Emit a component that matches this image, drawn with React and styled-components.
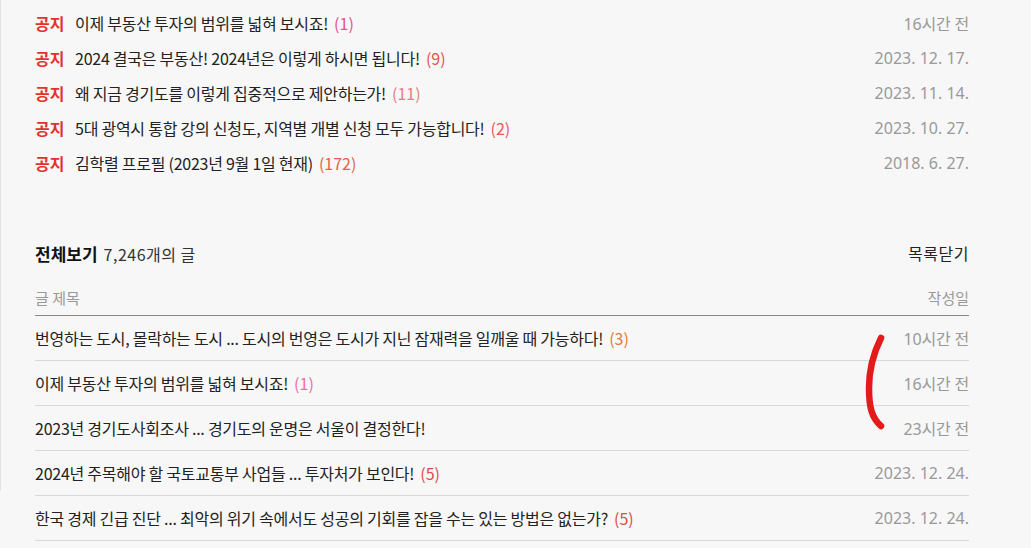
import React from "react";
import styled, { createGlobalStyle } from "styled-components";

const Global = createGlobalStyle`
  html, body { margin: 0; padding: 0; background: #f7f7f7; }
  body {
    font-family: "Noto Sans CJK KR", "Noto Sans", sans-serif;
    color: #222;
  }
`;

const Page = styled.div`
  position: relative;
  width: 1031px;
  height: 548px;
  overflow: hidden;
  background: #f7f7f7;
  box-sizing: border-box;
  padding: 5px 62px 0 35px;
  &::before {
    content: "";
    position: absolute;
    left: 0;
    top: 0;
    width: 1px;
    height: 491px;
    background: #e2e2e2;
  }
`;

const NoticeList = styled.ul`
  list-style: none;
  margin: 0;
  padding: 0;
`;

const NoticeRow = styled.li`
  display: flex;
  align-items: center;
  height: 35px;
  font-size: 16px;
`;

const Badge = styled.span`
  color: #e3322b;
  font-weight: 700;
  width: 40px;
  flex: none;
`;

const Title = styled.span`
  flex: 1;
  color: #222;
  white-space: nowrap;
  letter-spacing: -0.25px;
`;

const Count = styled.span`
  color: ${(p) => p.$c};
  margin-left: 6px;
  letter-spacing: 0;
`;

const DateText = styled.span`
  color: #999;
  font-family: "Noto Sans", "Noto Sans CJK KR", sans-serif;
  font-size: 16px;
  letter-spacing: ${(p) => (p.$tight ? "-0.2px" : "0")};
  white-space: nowrap;
`;

const SectionHead = styled.div`
  display: flex;
  align-items: center;
  justify-content: space-between;
  height: 30px;
  margin-top: 58px;
  font-size: 16px;
`;

const SectionTitle = styled.div`
  display: flex;
  align-items: baseline;
  strong { font-weight: 700; font-size: 17px; color: #111; margin-right: 6px; }
  span { color: #333; font-size: 16px; letter-spacing: 0.5px; }
`;

const CloseLink = styled.span`
  color: #222;
  letter-spacing: 0.5px;
`;

const ColHead = styled.div`
  display: flex;
  align-items: center;
  justify-content: space-between;
  height: 35px;
  margin-top: 12px;
  border-bottom: 1px solid #8a8a8a;
  color: #999;
  font-size: 15px;
`;

const PostList = styled.ul`
  list-style: none;
  margin: 0;
  padding: 0;
`;

const PostRow = styled.li`
  display: flex;
  align-items: center;
  height: 44px;
  border-bottom: 1px solid #d9d9d9;
  font-size: 16px;
`;

const Mark = styled.svg`
  position: absolute;
  left: 862px;
  top: 330px;
  width: 30px;
  height: 105px;
  pointer-events: none;
`;

const notices = [
  { t: "이제 부동산 투자의 범위를 넓혀 보시죠!", c: "(1)", col: "#e9508e", d: "16시간 전" },
  { t: "2024 결국은 부동산! 2024년은 이렇게 하시면 됩니다!", c: "(9)", col: "#e8534a", d: "2023. 12. 17." },
  { t: "왜 지금 경기도를 이렇게 집중적으로 제안하는가!", c: "(11)", col: "#e87c8a", d: "2023. 11. 14." },
  { t: "5대 광역시 통합 강의 신청도, 지역별 개별 신청 모두 가능합니다!", c: "(2)", col: "#e05a5a", d: "2023. 10. 27." },
  { t: "김학렬 프로필 (2023년 9월 1일 현재)", c: "(172)", col: "#e8604a", d: "2018. 6. 27." },
];

const posts = [
  { t: "번영하는 도시, 몰락하는 도시 ... 도시의 번영은 도시가 지닌 잠재력을 일깨울 때 가능하다!", c: "(3)", col: "#e07a3a", d: "10시간 전" },
  { t: "이제 부동산 투자의 범위를 넓혀 보시죠!", c: "(1)", col: "#e9709a", d: "16시간 전" },
  { t: "2023년 경기도사회조사 ... 경기도의 운명은 서울이 결정한다!", c: null, d: "23시간 전" },
  { t: "2024년 주목해야 할 국토교통부 사업들 ... 투자처가 보인다!", c: "(5)", col: "#e04a48", d: "2023. 12. 24." },
  { t: "한국 경제 긴급 진단 ... 최악의 위기 속에서도 성공의 기회를 잡을 수는 있는 방법은 없는가?", c: "(5)", col: "#e04a48", d: "2023. 12. 24." },
];

const isRelative = (d) => d.includes("시간");

export default function App() {
  return (
    <>
      <Global />
      <Page>
        <NoticeList>
          {notices.map((n, i) => (
            <NoticeRow key={i}>
              <Badge>공지</Badge>
              <Title>
                {n.t}
                <Count $c={n.col}>{n.c}</Count>
              </Title>
              <DateText $tight={isRelative(n.d)}>{n.d}</DateText>
            </NoticeRow>
          ))}
        </NoticeList>

        <SectionHead>
          <SectionTitle>
            <strong>전체보기</strong>
            <span>7,246개의 글</span>
          </SectionTitle>
          <CloseLink>목록닫기</CloseLink>
        </SectionHead>

        <ColHead>
          <span>글 제목</span>
          <span>작성일</span>
        </ColHead>

        <PostList>
          {posts.map((p, i) => (
            <PostRow key={i}>
              <Title>
                {p.t}
                {p.c && <Count $c={p.col}>{p.c}</Count>}
              </Title>
              <DateText $tight={isRelative(p.d)}>{p.d}</DateText>
            </PostRow>
          ))}
        </PostList>

        <Mark viewBox="0 0 30 105">
          <path
            d="M19 8 C12 22, 7 38, 7 58 C7 78, 10 88, 19 96"
            fill="none"
            stroke="#e41b1b"
            strokeWidth="6.5"
            strokeLinecap="round"
          />
        </Mark>
      </Page>
    </>
  );
}
